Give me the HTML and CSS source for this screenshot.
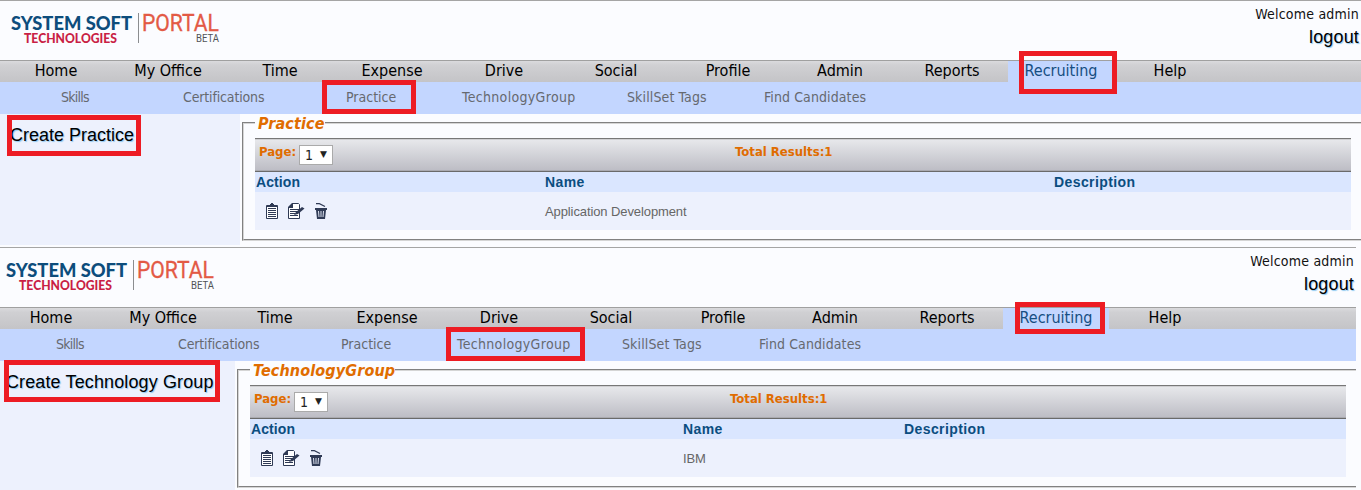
FILE: index.html
```html
<!DOCTYPE html>
<html lang="en">
<head>
<meta charset="utf-8">
<title>System Soft Portal</title>
<link rel="stylesheet" href="styles.css">
</head>
<body>
<svg class="defs" aria-hidden="true">
  <symbol id="logo" viewBox="0 0 220 40">
    <text class="logo-system" x="0" y="20" textLength="121" lengthAdjust="spacingAndGlyphs">SYSTEM SOFT</text>
    <text class="logo-tech" x="13" y="32.500" textLength="93" lengthAdjust="spacingAndGlyphs">TECHNOLOGIES</text>
    <text class="logo-beta" x="185" y="32" textLength="23" lengthAdjust="spacingAndGlyphs">BETA</text>
    <path d="M127.500 3V33" stroke="#8b8d90" fill="none"/>
    <text class="logo-portal" x="131" y="21" textLength="77" lengthAdjust="spacingAndGlyphs">PORTAL</text>
  </symbol>
  <symbol id="clipboard" viewBox="0 0 12 16">
    <path d="M.500 2.500H11.500V15.500H.500Z" fill="#fff" stroke="#2f3a55"/>
    <path d="M1 2H4V1H5V0H7V1H8V2H11V4H1Z" fill="#2f3a55"/>
    <path d="M2 5.500H10M2 7.500H10M2 9.500H10M2 11.500H10M2 13.500H10" stroke="#2f3a55"/>
  </symbol>
  <symbol id="edit" viewBox="0 0 17 16">
    <path d="M4.500 .500H10.500L11.500 1.500V15.500H.500V4.500Z" fill="#fff" stroke="#2f3a55"/>
    <path d="M0 5V4L4 0H5V5Z" fill="#2f3a55"/>
    <path d="M2 6.500H11M2 8.500H10M2 10.500H7M2 12.500H10" stroke="#2f3a55"/>
    <path d="M6 12L8 9L14 4L16.500 5.500L10 11Z" fill="#2f3a55"/>
  </symbol>
  <symbol id="trash" viewBox="0 0 14 16">
    <path d="M2 .500H5L11 3.500" stroke="#2f3a55" stroke-width="1.300" fill="none"/>
    <path d="M1 5H13V7H12L11 16H3L2 7H1Z" fill="#2f3a55"/>
    <path d="M4.500 8L5 14M7 8V14M9.500 8L9 14" stroke="#dfe4f2"/>
  </symbol>
</svg>

<section class="pane pane-practice">
  <header class="header">
    <svg class="logo"><use href="#logo"/></svg>
    <div class="user"><span class="welcome">Welcome admin</span><a class="logout">logout</a></div>
  </header>
  <nav class="menu">
    <a>Home</a><a>My Office</a><a>Time</a><a>Expense</a><a>Drive</a><a>Social</a><a>Profile</a><a>Admin</a><a>Reports</a><a class="active">Recruiting</a><a>Help</a>
  </nav>
  <nav class="submenu">
    <a class="s-skills">Skills</a><a class="s-cert">Certifications</a><a>Practice</a><a class="s-tech">TechnologyGroup</a><a class="s-tags">SkillSet Tags</a><a class="s-find">Find Candidates</a>
  </nav>
  <div class="content">
    <aside class="side"><a class="create">Create Practice</a></aside>
    <main class="group">
      <div class="legend">Practice</div>
      <div class="pager"><span class="page">Page:</span><span class="select"><b>1</b><i>▼</i></span><span class="total">Total Results:1</span></div>
      <div class="row head"><span>Action</span><span>Name</span><span>Description</span></div>
      <div class="row data"><span class="actions"><svg class="i-clip"><use href="#clipboard"/></svg><svg class="i-edit"><use href="#edit"/></svg><svg class="i-trash"><use href="#trash"/></svg></span><span>Application Development</span><span></span></div>
    </main>
  </div>
  <div class="mark mark-recruiting"></div>
  <div class="mark mark-tab"></div>
  <div class="mark mark-create"></div>
</section>

<section class="pane pane-tech">
  <header class="header">
    <svg class="logo"><use href="#logo"/></svg>
    <div class="user"><span class="welcome">Welcome admin</span><a class="logout">logout</a></div>
  </header>
  <nav class="menu">
    <a>Home</a><a>My Office</a><a>Time</a><a>Expense</a><a>Drive</a><a>Social</a><a>Profile</a><a>Admin</a><a>Reports</a><a class="active">Recruiting</a><a>Help</a>
  </nav>
  <nav class="submenu">
    <a class="s-skills">Skills</a><a class="s-cert">Certifications</a><a>Practice</a><a class="s-tech">TechnologyGroup</a><a class="s-tags">SkillSet Tags</a><a class="s-find">Find Candidates</a>
  </nav>
  <div class="content">
    <aside class="side"><a class="create">Create Technology Group</a></aside>
    <main class="group">
      <div class="legend">TechnologyGroup</div>
      <div class="pager"><span class="page">Page:</span><span class="select"><b>1</b><i>▼</i></span><span class="total">Total Results:1</span></div>
      <div class="row head"><span>Action</span><span>Name</span><span>Description</span></div>
      <div class="row data"><span class="actions"><svg class="i-clip"><use href="#clipboard"/></svg><svg class="i-edit"><use href="#edit"/></svg><svg class="i-trash"><use href="#trash"/></svg></span><span>IBM</span><span></span></div>
    </main>
  </div>
  <div class="mark mark-recruiting"></div>
  <div class="mark mark-tab"></div>
  <div class="mark mark-create"></div>
</section>
</body>
</html>
```
FILE: styles.css
```css
* { box-sizing: border-box; }
html, body { height: 490px; overflow: hidden; }
body { margin: 0; background: #fbfcff; font-family: "DejaVu Sans Condensed", "Noto Sans", sans-serif; }
.defs { position: absolute; width: 0; height: 0; }

.pane { position: relative; width: 1361px; height: 247px; overflow: hidden; background: #fbfcff; }
.pane-tech { margin-left: -5px; }

.header { height: 60px; border-top: 1px solid #a5a5a5; display: flex; justify-content: space-between; }
.logo { width: 220px; height: 40px; margin: 9px 0 0 11px; }
.logo-system { font-family: Lato, sans-serif; font-size: 19.5px; font-weight: 900; fill: #0d4d7c; }
.logo-tech { font-family: Lato, sans-serif; font-size: 12.5px; font-weight: 900; fill: #c91f45; }
.logo-portal { font-family: Roboto, sans-serif; font-size: 23.5px; fill: #e35a45; stroke: #e35a45; stroke-width: .3px; }
.logo-beta { font-family: Roboto, sans-serif; font-size: 10px; fill: #505356; }
.user { display: flex; flex-direction: column; align-items: flex-end; padding: 4px 2px 0 0; }
.welcome { font-size: 14px; line-height: 18px; color: #111; letter-spacing: .22px; }
.logout { font: 18px/28px "Liberation Sans", Arial, sans-serif; color: #000; text-shadow: 1px 1px 1px #8cc8f0; letter-spacing: .15px; }

.menu { height: 22px; display: flex; border-top: 1px solid #a0a0a0; background: linear-gradient(#dadadd, #d0d0d3 20%, #c4c4c7); }
.menu a { width: 112px; text-align: center; font-size: 16px; line-height: 19px; color: #000; }
.menu .active { width: 106px; background: #c3d6ff; color: #164e82; }

.submenu { height: 32px; background: #c3d6ff; display: grid; grid-template-columns: 122px 163px 116px 165px 137px 1fr; padding-left: 61px; }
.submenu a { font-size: 14px; line-height: 30px; color: #66696f; white-space: nowrap; }
.submenu .s-skills { letter-spacing: -.75px; }
.submenu .s-cert { letter-spacing: -.15px; }
.submenu .s-tech { letter-spacing: .33px; }
.submenu .s-tags { letter-spacing: .12px; }
.submenu .s-find { letter-spacing: .1px; }

.content { display: flex; height: 133px; }
.side { flex: none; width: 240px; height: 131px; background: #edf1fd; padding: 8px 0 0 10px; }
.create { font: 18px/26px "Liberation Sans", Arial, sans-serif; color: #000; text-shadow: 1px 1px 1px #8cc8f0; white-space: nowrap; }
.pane-tech .create { letter-spacing: .12px; padding-left: 1px; }
.group { flex: none; width: 1130px; height: 119px; margin: 8px 0 0 2px; border: 2px groove #d5d5d5; padding-left: 11px; }
.legend { width: max-content; height: 14px; line-height: 18px; margin-top: -9px; margin-bottom: 9px; padding-left: 3px; background: #fbfcff; color: #e06c00; font-size: 16px; font-weight: bold; font-style: italic; letter-spacing: .13px; white-space: nowrap; }
.pager { width: 1096px; height: 34px; border-top: 1px solid #777; border-bottom: 1px solid #6a6a6a; background: linear-gradient(#e8e9ec, #bcbcc4); box-shadow: inset 0 1px #cfcfd2, inset 0 -1px #aaaab0; display: flex; color: #e06c00; font-size: 13px; font-weight: bold; padding-left: 4px; }
.page { width: 40px; line-height: 26px; }
.select { width: 34px; height: 20px; margin-top: 6px; border: 1px solid #aaa; background: #fff; color: #222; display: flex; justify-content: space-between; padding: 0 5px; line-height: 19px; }
.select b { font: 14px/19px "DejaVu Sans Condensed", sans-serif; }
.select i { font: 9px/17px "DejaVu Sans", sans-serif; }
.total { margin-left: 402px; line-height: 26px; }
.row { width: 1096px; display: grid; font-family: "Liberation Sans", Arial, sans-serif; padding-left: 1px; white-space: nowrap; }
.pane-practice .row { grid-template-columns: 289px 509px 1fr; }
.pane-tech .row { grid-template-columns: 432px 221px 1fr; }
.head { height: 20px; background: #dae6ff; color: #0b4d80; font-size: 14px; font-weight: bold; line-height: 20px; letter-spacing: .4px; }
.head span:first-child { letter-spacing: .1px; }
.data { height: 38px; background: #edf1fd; color: #666; font-size: 13px; line-height: 39px; letter-spacing: -.1px; }
.actions { display: flex; align-items: flex-start; padding: 11px 0 0 10px; }
.i-clip { width: 12px; height: 16px; }
.i-edit { width: 17px; height: 16px; margin-left: 10px; }
.i-trash { width: 14px; height: 16px; margin-left: 9px; }

/* Highlight frames laid over the page */
.mark { position: absolute; border: 5px solid #ed1c24; }
.pane-practice .mark-recruiting { left: 1019px; top: 51px; width: 98px; height: 43px; }
.pane-practice .mark-tab { left: 322px; top: 80px; width: 94px; height: 34px; }
.pane-practice .mark-create { left: 7px; top: 115px; width: 134px; height: 41px; }
.pane-tech .mark-recruiting { left: 1020px; top: 55px; width: 90px; height: 32px; }
.pane-tech .mark-tab { left: 451px; top: 80px; width: 139px; height: 34px; }
.pane-tech .mark-create { left: 9px; top: 113px; width: 216px; height: 42px; }
```
